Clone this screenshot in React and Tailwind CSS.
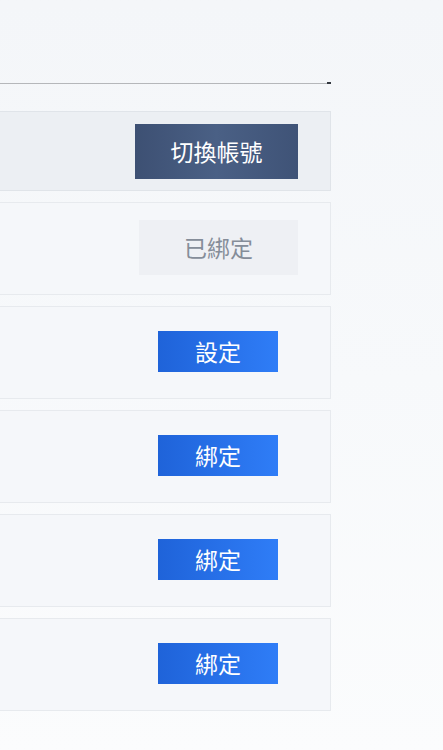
import React from "react";

const rows = [
  { id: "bind-1", label: "綁定" },
  { id: "bind-2", label: "綁定" },
  { id: "bind-3", label: "綁定" },
];

const BlueButton = ({ children }) => (
  <button className="w-[120px] h-[41px] mb-[2px] bg-gradient-to-r from-[#1f63d9] to-[#2f7df7] text-white text-[23px] leading-none">
    {children}
  </button>
);

const App = () => {
  return (
    <div
      className="w-[443px] h-[750px] overflow-hidden bg-gradient-to-b from-[#f4f6f9] via-[#f7f9fb] to-[#fbfcfd]"
      style={{ fontFamily: '"Noto Sans CJK TC", "Noto Sans", sans-serif' }}
    >
      <div className="w-[331px]">
        {/* top divider */}
        <div className="h-[84px] flex items-end">
          <div className="flex-1 h-px bg-[#b5b7ba]" />
          <div className="w-[4px] h-[2px] bg-[#333840]" />
        </div>

        <div className="mt-[27px] flex flex-col gap-[11px]">
          {/* account row */}
          <div className="h-[80px] bg-[#eceff3] border border-[#e0e4e9] border-l-0 flex items-center justify-end pr-[32px]">
            <button className="w-[163px] h-[55px] bg-gradient-to-r from-[#3d5073] via-[#4a6085] to-[#3f5377] text-white text-[23px] leading-none">
              切換帳號
            </button>
          </div>

          {/* bound row */}
          <div className="h-[93px] bg-[#f5f7fa] border border-[#e7eaee] border-l-0 flex items-center justify-end pr-[32px]">
            <div className="w-[159px] h-[55px] mb-[2px] bg-[#eef0f4] text-[#858d99] text-[23px] leading-none flex items-center justify-center">
              已綁定
            </div>
          </div>

          {/* settings row */}
          <div className="h-[93px] bg-[#f5f7fa] border border-[#e7eaee] border-l-0 flex items-center justify-end pr-[52px]">
            <BlueButton>設定</BlueButton>
          </div>

          {rows.map((row) => (
            <div
              key={row.id}
              className="h-[93px] bg-[#f5f7fa] border border-[#e7eaee] border-l-0 flex items-center justify-end pr-[52px]"
            >
              <BlueButton>{row.label}</BlueButton>
            </div>
          ))}
        </div>
      </div>
    </div>
  );
};

export default App;
